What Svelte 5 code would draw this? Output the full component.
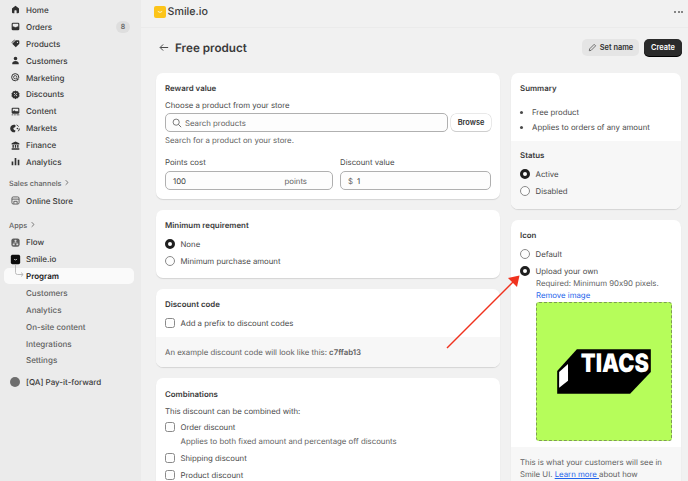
<script>
  const icons = {
    home: "M10 3 3.600 8.200V15a2 2 0 0 0 2 2H8v-4.500a1 1 0 0 1 1-1h2a1 1 0 0 1 1 1V17h2.400a2 2 0 0 0 2-2V8.200z",
    orders: "M5.500 3h9A2.500 2.500 0 0 1 17 5.500v9a2.500 2.500 0 0 1-2.500 2.500h-9A2.500 2.500 0 0 1 3 14.500v-9A2.500 2.500 0 0 1 5.500 3M5 5v5h2.500l1 1.500h3l1-1.500H15V5z",
    products: "M10.500 4H15a2 2 0 0 1 2 2v4.500L10.500 17 4 10.500zM13.500 7a1 1 0 1 0 0 2 1 1 0 0 0 0-2M3 9.500 9.500 3H8L3 7.500z",
    customers: "M10 3a3.300 3.300 0 1 1 0 6.600A3.300 3.300 0 0 1 10 3M4 16c0-3.500 2.500-5 6-5s6 1.500 6 5a1 1 0 0 1-1 1H5a1 1 0 0 1-1-1",
    discounts: "M10 2.500 12 4.200 14.600 4 15.400 6.500 17.500 8 16.600 10.500 17.500 13 15.400 14.500 14.600 17 12 16.800 10 18.500 8 16.800 5.400 17 4.600 14.500 2.500 13 3.400 10.500 2.500 8 4.600 6.500 5.400 4 8 4.200zM8 7a1 1 0 1 0 0 2 1 1 0 0 0 0-2M12 11a1 1 0 1 0 0 2 1 1 0 0 0 0-2M12.500 7 7 12.500l.7.700L13.200 7.700z",
    content: "M5 3h10a2 2 0 0 1 2 2v7a2 2 0 0 1-2 2H5a2 2 0 0 1-2-2V5a2 2 0 0 1 2-2m0 2v5l3-2.500 3 2.500 1.500-1L15 10V5zM3 15.500h3V17H3zM7.500 15.500h3V17h-3zM12 15.500h5V17h-5z",
    finance: "M10 2.500 17 6v2H3V6zM4.500 9h2.500v5H4.500zM8.800 9h2.400v5H8.800zM13 9h2.500v5H13zM3 15h14v2.500H3z",
    analytics: "M8.500 3.500h3V17h-3zM14 7h3v10h-3zM3 10h3v7H3z"
  };

  const mainNav = [
    { label: "Home", icon: "home" },
    { label: "Orders", icon: "orders", badge: 8 },
    { label: "Products", icon: "products" },
    { label: "Customers", icon: "customers" },
    { label: "Marketing", icon: "marketing" },
    { label: "Discounts", icon: "discounts" },
    { label: "Content", icon: "content" },
    { label: "Markets", icon: "markets" },
    { label: "Finance", icon: "finance" },
    { label: "Analytics", icon: "analytics" }
  ];
  const subNav = ["Customers", "Analytics", "On-site content", "Integrations", "Settings"];
</script>

{#snippet radio(label, checked = false)}
  <div class="option">
    <span class="radio" class:checked></span>
    <span>{label}</span>
  </div>
{/snippet}

{#snippet checkbox(label)}
  <div class="option">
    <span class="check"></span>
    <span>{label}</span>
  </div>
{/snippet}

{#snippet chevron()}
  <svg class="chev" viewBox="0 0 6 8"><path d="M2 1.200 4.800 4 2 6.800" fill="none" stroke="currentColor" stroke-width="1" /></svg>
{/snippet}

<div class="app">
  <nav class="sidebar">
    {#each mainNav as item}
      <div class="nav-row">
        <span class="nav-icon">
          {#if item.icon === "marketing"}
            <svg viewBox="0 0 20 20"><circle cx="9.500" cy="9.500" r="6.500" fill="none" stroke="#303030" stroke-width="1.800" /><circle cx="9.500" cy="9.500" r="3" fill="none" stroke="#303030" stroke-width="1.500" /><path d="M10 10l7.500 2.500-3 1.500-1.500 3z" fill="#303030" stroke="#ebebeb" stroke-width=".8" /></svg>
          {:else if item.icon === "markets"}
            <svg viewBox="0 0 20 20"><path d="M9 3.200a7 7 0 1 0 0 13.600l1-3-3-1.500-1-3 3-1.500 1.500-2.500z" fill="#303030" /><path d="M12 3.500a7 7 0 0 1 3.500 3M17 10a7 7 0 0 1-2 5" fill="none" stroke="#303030" stroke-width="1.800" /><circle cx="13.500" cy="10" r="1.500" fill="#303030" /></svg>
          {:else}
            <svg viewBox="0 0 20 20"><path d={icons[item.icon]} fill="#303030" fill-rule="evenodd" /></svg>
          {/if}
        </span>
        <span class="nav-label">{item.label}</span>
        {#if item.badge}<span class="badge">{item.badge}</span>{/if}
      </div>
    {/each}

    <div class="nav-heading first">Sales channels {@render chevron()}</div>
    <div class="nav-row">
      <span class="nav-icon">
        <svg viewBox="0 0 20 20"><rect x="3.500" y="3.500" width="13" height="13" rx="2.500" fill="none" stroke="#4a4a4a" stroke-width="1.500" /><path d="M3.500 7.500h13M7 16v-4.500h6V16" fill="none" stroke="#4a4a4a" stroke-width="1.500" /></svg>
      </span>
      <span class="nav-label">Online Store</span>
    </div>

    <div class="nav-heading">Apps {@render chevron()}</div>
    <div class="nav-row">
      <span class="nav-icon">
        <svg viewBox="0 0 20 20"><rect x="2.500" y="2.500" width="15" height="15" rx="4" fill="#5e5e5e" /><circle cx="10" cy="7" r="2" fill="#d8d8d8" /><rect x="5" y="12" width="3.500" height="3" fill="#d8d8d8" /><rect x="11.500" y="12" width="3.500" height="3" fill="#d8d8d8" /><path d="M6.800 12v-1.500h6.400V12M10 9v1.500" fill="none" stroke="#d8d8d8" /></svg>
      </span>
      <span class="nav-label">Flow</span>
    </div>
    <div class="nav-row">
      <span class="nav-icon">
        <svg viewBox="0 0 20 20"><rect x="1.500" y="1.500" width="17" height="17" rx="3" fill="#0c0c0c" /><path d="M7.300 9.500q2.700 2.600 5.400 0" fill="none" stroke="#eee" stroke-width="1.300" /></svg>
      </span>
      <span class="nav-label">Smile.io</span>
    </div>

    <div class="nav-row sub active">
      <svg class="branch" viewBox="0 0 14 16"><path d="M1.500 0v8.500a2 2 0 0 0 2 2H9M7 8.500l2.200 2L7 12.500" fill="none" stroke="#b5b5b5" stroke-width=".9" /></svg>
      <span class="nav-label">Program</span>
    </div>
    {#each subNav as label}
      <div class="nav-row sub"><span class="nav-label">{label}</span></div>
    {/each}

    <div class="nav-row extra">
      <span class="nav-icon"><span class="dot"></span></span>
      <span class="nav-label">[QA] Pay-it-forward</span>
    </div>
  </nav>

  <div class="main">
    <header class="topbar">
      <span class="logo">
        <svg viewBox="0 0 12 12"><path d="M3.800 5.400q2.200 2 4.400 0" fill="none" stroke="#fff3c4" stroke-width="1" /></svg>
      </span>
      <span class="brand">Smile.io</span>
      <span class="more">
        <i></i><i></i><i></i>
      </span>
    </header>

    <div class="page">
      <div class="page-head">
        <svg class="back" viewBox="0 0 12 10"><path d="M11 5H1.500M5 1.300 1.300 5 5 8.700" fill="none" stroke="#4a4a4a" stroke-width="1.200" /></svg>
        <h1>Free product</h1>
        <button class="btn-grey">
          <svg viewBox="0 0 12 12"><path d="M8.200 1.800 10.200 3.800 4.200 9.800 1.700 10.300 2.200 7.800z" fill="none" stroke="#4a4a4a" stroke-width="1" /></svg>
          Set name
        </button>
        <button class="btn-dark">Create</button>
      </div>

      <div class="columns">
        <div class="col-left">
          <section class="card">
            <div class="pad">
              <h2>Reward value</h2>
              <div class="label">Choose a product from your store</div>
              <div class="search-row">
                <div class="field search">
                  <svg viewBox="0 0 12 12"><circle cx="5" cy="5" r="3.700" fill="none" stroke="#616161" stroke-width="1" /><path d="M7.800 7.800 11 11" stroke="#616161" stroke-width="1.100" /></svg>
                  <span class="muted">Search products</span>
                </div>
                <button class="btn-white">Browse</button>
              </div>
              <div class="help">Search for a product on your store.</div>
              <div class="two">
                <div>
                  <div class="label">Points cost</div>
                  <div class="field"><span>100</span><span class="suffix">points</span></div>
                </div>
                <div>
                  <div class="label">Discount value</div>
                  <div class="field"><span class="prefix">$</span><span>1</span></div>
                </div>
              </div>
            </div>
          </section>

          <section class="card">
            <div class="pad">
              <h2>Minimum requirement</h2>
              <div class="options">
                {@render radio("None", true)}
                {@render radio("Minimum purchase amount")}
              </div>
            </div>
          </section>

          <section class="card">
            <div class="pad short">
              <h2>Discount code</h2>
              <div class="options">{@render checkbox("Add a prefix to discount codes")}</div>
            </div>
            <div class="foot low">An example discount code will look like this: <b>c7ffab13</b></div>
          </section>

          <section class="card">
            <div class="pad combo">
              <h2>Combinations</h2>
              <div class="label">This discount can be combined with:</div>
              <div class="options tight">
                {@render checkbox("Order discount")}
                <div class="note">Applies to both fixed amount and percentage off discounts</div>
                {@render checkbox("Shipping discount")}
                {@render checkbox("Product discount")}
              </div>
            </div>
          </section>
        </div>

        <div class="col-right">
          <section class="card">
            <div class="pad short">
              <h2>Summary</h2>
              <ul>
                <li>Free product</li>
                <li>Applies to orders of any amount</li>
              </ul>
            </div>
            <div class="foot">
              <h2>Status</h2>
              <div class="options">
                {@render radio("Active", true)}
                {@render radio("Disabled")}
              </div>
            </div>
          </section>

          <section class="card">
            <div class="pad short">
              <h2>Icon</h2>
              <div class="options">
                {@render radio("Default")}
                {@render radio("Upload your own", true)}
              </div>
              <div class="upload">
                <div class="help">Required: Minimum 90x90 pixels.</div>
                <div class="link">Remove image</div>
                <div class="dropzone">
                  <svg viewBox="0 0 135 139">
                    <path d="M40 47H115V70L94 92H20V69z" fill="#000" />
                    <path d="M31 62V79L22 86V70z" fill="#fff" />
                    <text x="44" y="70" textLength="69" lengthAdjust="spacingAndGlyphs" class="tiacs">TIACS</text>
                  </svg>
                </div>
              </div>
            </div>
            <div class="foot low">This is what your customers will see in Smile UI. <u>Learn more&nbsp;</u>about how</div>
          </section>
        </div>
      </div>
    </div>
  </div>

  <svg class="arrow" viewBox="0 0 688 481">
    <path d="M447 348 513 282" stroke="#f0321e" stroke-width="1.500" fill="none" />
    <path d="M519.500 275.500 517 287 508 278z" fill="#f0321e" />
  </svg>
</div>

<style>
  :global(body) {
    margin: 0;
    font-family: Inter, "Noto Sans", sans-serif;
    font-feature-settings: "calt" 0;
    text-rendering: geometricPrecision;
  }

  .app {
    position: relative;
    display: flex;
    width: 688px;
    height: 481px;
    overflow: hidden;
    background: #f1f1f1;
    color: #3a3a3a;
    font-size: 7.800px;
    line-height: 12px;
  }

  .sidebar {
    flex: 0 0 141px;
    box-sizing: border-box;
    padding-top: 1.500px;
    background: #ebebeb;
  }

  .nav-row {
    display: flex;
    align-items: center;
    height: 16.900px;
    margin: 0 7px 0 4px;
    padding-right: 4px;
    font-size: 8px;
    font-weight: 500;
  }

  .nav-icon {
    display: flex;
    justify-content: center;
    width: 22px;
  }

  .nav-icon svg {
    width: 11px;
    height: 11px;
  }

  .badge {
    margin-left: auto;
    width: 14px;
    height: 12px;
    border-radius: 6px;
    background: #dedede;
    color: #616161;
    font-size: 7px;
    text-align: center;
  }

  .nav-heading {
    height: 17px;
    padding-left: 9px;
    color: #616161;
    font-size: 7.300px;
    font-weight: 500;
    line-height: 17px;
  }

  .nav-heading.first {
    margin-top: 5px;
  }

  .nav-heading:not(.first) {
    margin-top: 7.500px;
  }

  .chev {
    width: 5px;
    height: 7px;
    margin-left: 1px;
  }

  .sub {
    position: relative;
    padding-left: 22px;
    color: #616161;
  }

  .sub.active {
    background: #fafafa;
    border-radius: 5px;
    color: #1a1a1a;
    font-weight: 600;
  }

  .branch {
    position: absolute;
    left: 10px;
    top: -4px;
    width: 14px;
    height: 16px;
  }

  .extra {
    margin-top: 4.500px;
  }

  .dot {
    width: 10px;
    height: 10px;
    border-radius: 50%;
    background: #6e6e6e;
  }

  .main {
    flex: 1;
    min-width: 0;
  }

  .topbar {
    display: flex;
    align-items: center;
    gap: 1.500px;
    box-sizing: border-box;
    height: 28px;
    padding: 0 5px 4px 13px;
    border-bottom: 1px solid #ebebeb;
  }

  .logo {
    width: 12px;
    height: 12px;
    border-radius: 2px;
    background: #fcc419;
  }

  .logo svg {
    display: block;
    width: 12px;
    height: 12px;
  }

  .brand {
    font-size: 10.700px;
    font-weight: 500;
  }

  .more {
    display: flex;
    gap: 1.500px;
    margin-left: auto;
  }

  .more i {
    width: 2px;
    height: 2px;
    border-radius: 50%;
    background: #616161;
  }

  .page {
    padding: 0 6px 0 15px;
  }

  .page-head {
    display: flex;
    align-items: center;
    height: 39px;
    margin-bottom: 6px;
  }

  .back {
    width: 10px;
    height: 9px;
    margin: 0 6px 0 3px;
  }

  h1 {
    margin: 0 auto 0 0;
    font-size: 11.700px;
    font-weight: 600;
  }

  button {
    font: inherit;
    font-weight: 600;
    font-size: 7.400px;
    border: 0;
    border-radius: 5px;
    cursor: pointer;
  }

  .btn-grey {
    display: flex;
    align-items: center;
    justify-content: center;
    gap: 3px;
    width: 57px;
    height: 17px;
    padding: 0;
    margin-right: 5px;
    background: #e5e5e5;
    color: #303030;
  }

  .btn-grey svg {
    width: 9px;
    height: 9px;
  }

  .btn-dark {
    width: 38px;
    height: 17px;
    padding: 0;
    background: #2b2b2b;
    color: #fff;
    box-shadow: 0 1px 0 #000;
  }

  .btn-white {
    flex: none;
    width: 40px;
    height: 17px;
    padding: 0;
    background: #fff;
    color: #303030;
    box-shadow: 0 0 0 .5px #d4d4d4, 0 1px 0 #c8c8c8;
  }

  .columns {
    display: flex;
    gap: 11px;
    align-items: flex-start;
  }

  .col-left {
    flex: 0 0 344px;
  }

  .col-right {
    flex: 0 0 170px;
  }

  .card {
    margin-bottom: 11px;
    overflow: hidden;
    border-radius: 7px;
    background: #fff;
    box-shadow: 0 1px 1px rgba(0, 0, 0, .12);
  }

  .pad {
    padding: 9px;
  }

  .pad.short {
    padding-bottom: 6px;
  }

  .pad.combo {
    padding-top: 10px;
  }

  h2 {
    margin: 0;
    height: 12px;
    font-size: 7.900px;
    font-weight: 600;
  }

  .label {
    margin-top: 5px;
    color: #4a4a4a;
  }

  .search-row {
    display: flex;
    align-items: center;
    gap: 3px;
    margin-top: 2px;
  }

  .field {
    display: flex;
    align-items: center;
    box-sizing: border-box;
    height: 19px;
    margin-top: 3px;
    padding: 0 7px;
    border: 1px solid #b0b0b0;
    border-radius: 5px;
    background: #fdfdfd;
  }

  .search {
    flex: 1;
    margin-top: 0;
  }

  .search svg {
    width: 10px;
    height: 10px;
    margin: 0 3px 0 -1px;
  }

  .muted,
  .help,
  .suffix,
  .prefix,
  .note {
    color: #616161;
  }

  .suffix {
    margin-left: auto;
    margin-right: 18px;
  }

  .prefix {
    margin-right: 4px;
  }

  .help {
    margin-top: 2px;
  }

  .two {
    display: grid;
    grid-template-columns: 168px 151px;
    gap: 7px;
    margin-top: 10px;
  }

  .two .label {
    margin-top: 0;
  }

  .options {
    margin-top: 4px;
  }

  .options.tight {
    margin-top: 1px;
  }

  .option {
    display: flex;
    align-items: center;
    gap: 5.500px;
    height: 17px;
    color: #4a4a4a;
  }

  .radio {
    box-sizing: border-box;
    width: 10px;
    height: 10px;
    border: 1px solid #8a8a8a;
    border-radius: 50%;
    background: #fdfdfd;
  }

  .radio.checked {
    border: 3px solid #1f1f1f;
    background: #fff;
  }

  .check {
    box-sizing: border-box;
    width: 10px;
    height: 10px;
    border: 1px solid #8a8a8a;
    border-radius: 2.500px;
    background: #fdfdfd;
  }

  .note {
    margin: 0 0 2px 15.500px;
  }

  .foot {
    padding: 8px 9px 10px;
    background: #f7f7f7;
    color: #616161;
  }

  .foot.low {
    padding: 9px;
  }

  .foot h2 {
    color: #3a3a3a;
  }

  .foot b {
    font-weight: 600;
  }

  .foot u {
    color: #2463eb;
  }

  ul {
    margin: 12px 0 0;
    padding: 0 0 0 12px;
  }

  li {
    margin-bottom: 2.500px;
    color: #4a4a4a;
  }

  .upload {
    margin-left: 16px;
  }

  .upload .help {
    margin-top: -2px;
  }

  .link {
    color: #2463eb;
  }

  .dropzone {
    box-sizing: border-box;
    width: 136px;
    height: 139px;
    margin-top: 1px;
    border: 1px dashed #7f9c55;
    border-radius: 3px;
    background: #b6fd5a;
  }

  .dropzone svg {
    display: block;
    width: 134px;
    height: 137px;
  }

  .tiacs {
    fill: #fff;
    font-family: Inter, sans-serif;
    font-size: 26px;
    font-weight: 900;
  }

  .arrow {
    position: absolute;
    inset: 0;
    pointer-events: none;
  }
</style>
